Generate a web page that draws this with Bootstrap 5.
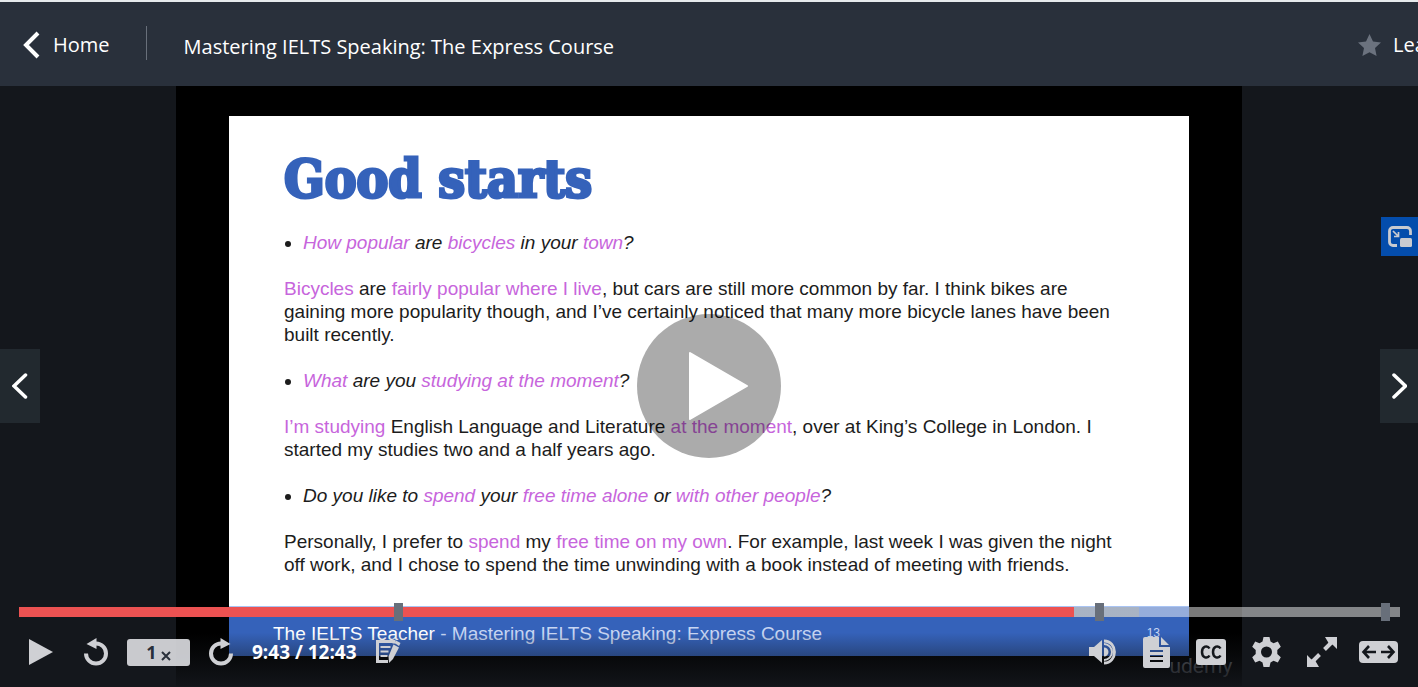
<!DOCTYPE html>
<html lang="en">
<head>
<meta charset="utf-8">
<meta name="viewport" content="width=device-width, initial-scale=1">
<title>Mastering IELTS Speaking: The Express Course</title>
<link href="https://cdn.jsdelivr.net/npm/bootstrap@5.3.0/dist/css/bootstrap.min.css" rel="stylesheet">
<style>
body { background: #14171c; font-family: "Open Sans", "Noto Sans", sans-serif; }
.topbar { height: 86px; background: #29303b; border-top: 2px solid #e6eaec; font-size: 20px; padding: 2px 0 0 23px; }
.topbar a { color: #fff; }
.home-link { gap: 13px; }
.divider { width: 1px; height: 34px; background: #686f7a; margin: 0 37px 4px 36px; }
.rate-btn { width: 60px; gap: 12px; font-size: 20px; }
.rate-btn span { color: #fff; }
.stage { min-height: 600px; margin-bottom: 1px; }
.video-box { height: 600px; aspect-ratio: 16 / 9; background: #000; }
.slide { width: 90%; height: 90%; background: #fff; color: #1c1c1c; font-family: "Liberation Sans", Arial, sans-serif; font-size: 19px; line-height: 23px; }
.slide-body { padding: 30px 55px 0; }
.slide-title { font-family: "DejaVu Serif Condensed", "DejaVu Serif", serif; font-weight: 700; font-size: 53px; line-height: 64px; margin-bottom: 21px; color: #3562ba; -webkit-text-stroke: 3px #3562ba; }
.slide p, .slide ul { margin-bottom: 23px; white-space: nowrap; }
.slide ul { padding-left: 19px; font-style: italic; }
.slide b { font-weight: 400; color: #c765dc; }
.slide-foot { height: 50px; padding: 3px 29px 0 44px; background: #3562ba; border-top: 1px solid #a9c4f3; color: #c8d6f3; }
.slide-foot strong { font-weight: 400; color: #fff; }
.slide-foot small { font-size: 12px; }
.watermark { right: 10px; bottom: 7px; color: #5c5e63; font-family: Roboto, sans-serif; font-size: 21px; line-height: 26px; }
.big-play { width: 144px; height: 144px; background: rgba(0,0,0,.33); }
.side-btn { width: 40px; height: 74px; background: #22292f; }
.side-btn.next { width: 38px; }
.side-btn, .pip-btn { border-radius: 0; }
.pip-btn { top: 131px; width: 37px; height: 39px; background: #044dac; }
.controls { height: 82px; padding: 3px 18px 0 19px; background: linear-gradient(rgba(20,23,28,0) 35%, rgba(20,23,28,.35) 62%, rgba(20,23,28,.9)); }
.track { height: 10px; }
.track input { appearance: none; height: 10px; background: linear-gradient(90deg, #ec5252 76.4%, rgba(184,190,197,.88) 76.4% 81.1%, rgba(255,255,255,.48) 81.1%); }
.track input::-webkit-slider-thumb { appearance: none; width: 1px; height: 1px; opacity: 0; }
.bookmark { width: 9px; height: 18px; top: -4px; background: #686f7a; }
.control-row { padding: 0 2px 0 9px; height: 70px; color: #cfd0d4; }
.btn-plain, .btn-plain:hover { padding: 0; border: 0; color: inherit; display: flex; align-items: center; justify-content: center; }
.left-set { gap: 19px; }
.right-set { gap: 22px; }
.control-row .speed { width: 63px; height: 27px; border-radius: 3px; background: rgba(221,222,226,.9); color: #29303b; font-weight: 700; font-size: 18px; gap: 4px; }
.time { color: #fff; font-weight: 700; font-size: 19px; white-space: nowrap; }
svg { display: block; flex: none; }
</style>
</head>
<body class="d-flex flex-column min-vh-100 overflow-hidden">
<header class="topbar d-flex align-items-center flex-shrink-0 overflow-hidden">
  <a href="#" class="home-link d-flex align-items-center text-decoration-none">
    <svg width="17" height="28" viewBox="0 0 17 28" fill="none" stroke="#fff" stroke-width="4"><path d="M15 2 3 14l12 12"/></svg>Home</a>
  <span class="divider"></span>
  <a href="#" class="text-decoration-none text-nowrap pt-1">Mastering IELTS Speaking: The Express Course</a>
  <button class="rate-btn btn btn-plain ms-auto justify-content-start flex-shrink-0 overflow-hidden">
    <svg width="23" height="23" viewBox="0 0 23 23" fill="#6b727e"><path d="M11.500 0 15 7.500l8 1.100-6 5.500 1.600 8-7.100-3.900-7.100 3.900 1.600-8-6-5.500 8-1.100z"/></svg><span>Lea</span></button>
</header>
<main class="stage position-relative flex-grow-1 d-flex justify-content-center">
  <section class="video-box position-relative d-flex align-items-center justify-content-center">
    <article class="slide d-flex flex-column">
      <div class="slide-body flex-grow-1">
        <h1 class="slide-title">Good starts</h1>
        <ul><li><b>How popular</b> are <b>bicycles</b> in your <b>town</b>?</li></ul>
        <p><b>Bicycles</b> are <b>fairly popular where I live</b>, but cars are still more common by far. I think bikes are<br>gaining more popularity though, and I’ve certainly noticed that many more bicycle lanes have been<br>built recently.</p>
        <ul><li><b>What</b> are you <b>studying at the moment</b>?</li></ul>
        <p><b>I’m studying</b> English Language and Literature <b>at the moment</b>, over at King’s College in London. I<br>started my studies two and a half years ago.</p>
        <ul><li>Do you like to <b>spend</b> your <b>free time alone</b> or <b>with other people</b>?</li></ul>
        <p>Personally, I prefer to <b>spend</b> my <b>free time on my own</b>. For example, last week I was given the night<br>off work, and I chose to spend the time unwinding with a book instead of meeting with friends.</p>
      </div>
      <footer class="slide-foot d-flex align-items-center justify-content-between"><span><strong>The IELTS Teacher</strong> - Mastering IELTS Speaking: Express Course</span><small>13</small></footer>
    </article>
    <span class="watermark position-absolute">udemy</span>
  </section>
  <button class="big-play btn btn-plain rounded-circle position-absolute top-50 start-50 translate-middle" aria-label="Play video">
    <svg width="144" height="144" viewBox="0 0 144 144"><path d="M53 39 110 72 53 105z" fill="#fff" stroke="#fff" stroke-width="2" stroke-linejoin="round"/></svg></button>
  <button class="side-btn btn btn-plain position-absolute start-0 top-50 translate-middle-y" aria-label="Previous lecture">
    <svg width="16" height="28" viewBox="0 0 16 28" fill="none" stroke="#fff" stroke-width="3.500" stroke-linecap="round"><path d="M13.500 3 2 14l11.500 11"/></svg></button>
  <button class="side-btn next btn btn-plain position-absolute end-0 top-50 translate-middle-y" aria-label="Next lecture">
    <svg width="16" height="28" viewBox="0 0 16 28" fill="none" stroke="#fff" stroke-width="3.500" stroke-linecap="round"><path d="M3 3 14.500 14 3 25"/></svg></button>
  <button class="pip-btn btn btn-plain position-absolute end-0" aria-label="Picture in picture">
    <svg width="24" height="22" viewBox="0 0 24 22"><path d="M22.500 9V5a3.500 3.500 0 0 0-3.500-3.500H5A3.500 3.500 0 0 0 1.500 5v11A3.500 3.500 0 0 0 5 19.500h4" fill="none" stroke="#c9cbd0" stroke-width="2.800"/><rect x="12" y="12" width="12" height="9" rx="1.500" fill="#c9cbd0"/><path d="m5 5 5 5M10.500 6v4.500H6" fill="none" stroke="#c9cbd0" stroke-width="1.700"/></svg></button>
  <div class="controls position-absolute start-0 end-0 bottom-0">
    <div class="track position-relative">
      <input type="range" class="d-block w-100" min="0" max="763" value="583" aria-label="Video progress">
      <span class="bookmark position-absolute" style="left:27.15%"></span>
      <span class="bookmark position-absolute" style="left:77.9%"></span>
      <span class="bookmark position-absolute" style="left:98.6%"></span>
    </div>
    <div class="control-row d-flex align-items-center justify-content-between">
      <div class="left-set d-flex align-items-center">
        <button class="btn btn-plain" aria-label="Play"><svg width="37" height="28" viewBox="0 0 37 28" fill="currentColor"><path d="M1 1v26l24-13z"/></svg></button>
        <button class="btn btn-plain" aria-label="Rewind"><svg width="24" height="28" viewBox="0 0 24 28"><path d="M2 15.500a10 10 0 1 0 10-10" fill="none" stroke="currentColor" stroke-width="4"/><path d="M2.500 6 12.500 0v11z" fill="currentColor"/></svg></button>
        <button class="btn btn-plain speed">1<svg width="10" height="10" viewBox="0 0 10 10" stroke="#29303b" stroke-width="2" class="mt-2"><path d="m1 1 8 8M9 1 1 9"/></svg></button>
        <button class="btn btn-plain" aria-label="Forward"><svg width="24" height="28" viewBox="0 0 24 28"><path d="M22 15.500a10 10 0 1 1-10-10" fill="none" stroke="currentColor" stroke-width="4"/><path d="M21.500 6 11.500 0v11z" fill="currentColor"/></svg></button>
        <span class="time">9:43 / 12:43</span>
        <button class="btn btn-plain" aria-label="Add note"><svg width="25" height="24" viewBox="0 0 25 24" fill="none" stroke="currentColor"><path d="M18 3.500V1.500H1.500v20H12" stroke-width="3"/><path d="M4.500 7h10M4.500 11.500h8M4.500 16h7" stroke-width="2.200"/><path d="M17.500 4.500 23 7.500 17 19l-4 4-.5-6.500z" fill="currentColor" stroke="none"/><path d="m18.500 3 1.500-2.500 4.500 2.500-1.500 3z" fill="currentColor" stroke="none"/></svg></button>
      </div>
      <div class="right-set d-flex align-items-center">
        <button class="btn btn-plain me-1" aria-label="Mute"><svg width="29" height="26" viewBox="0 0 29 26"><path d="M1 8h5l8-7v23l-8-7H1zM16 8.500a4.500 4.500 0 0 1 0 9z" fill="currentColor"/><path d="M16 5a7.500 7.500 0 0 1 0 16" fill="none" stroke="currentColor" stroke-width="2"/><path d="M16 2c14 0 14 22 0 22" fill="none" stroke="currentColor" stroke-width="2.800"/></svg></button>
        <button class="btn btn-plain me-1" aria-label="Transcript"><svg width="27" height="32" viewBox="0 0 27 32"><path fill-rule="evenodd" d="M2 1h14v10h11v19a2 2 0 0 1-2 2H2a2 2 0 0 1-2-2V3a2 2 0 0 1 2-2zM7 14v2h13v-2zm0 5v2h13v-2zm0 5v2h13v-2zM18 1l8 8h-8z" fill="currentColor"/></svg></button>
        <button class="btn btn-plain me-1" aria-label="Captions"><svg width="30" height="26" viewBox="0 0 30 26"><rect width="30" height="26" rx="3" fill="currentColor"/><path d="M13.500 9.500C11.500 6 6 7 6 13s5.500 7 7.500 3.500M24.500 9.500C22.500 6 17 7 17 13s5.500 7 7.500 3.500" fill="none" stroke="#14171c" stroke-width="2.500"/></svg></button>
        <button class="btn btn-plain me-1" aria-label="Settings"><svg width="29" height="32" viewBox="0 0 29 32"><path fill-rule="evenodd" d="M11.500 1h6l1 4.500 3 1.700 4.300-1.700 3 5.200-3.500 3.300v4l3.500 3.300-3 5.200-4.300-1.700-3 1.700-1 4.500h-6l-1-4.500-3-1.700-4.300 1.700-3-5.200L3.700 18v-4L.2 10.700l3-5.200 4.300 1.700 3-1.700zM14.500 10.500a5.500 5.500 0 1 0 0 11 5.500 5.500 0 0 0 0-11z" fill="currentColor"/></svg></button>
        <button class="btn btn-plain" aria-label="Full screen"><svg width="30" height="30" viewBox="0 0 30 30" fill="none" stroke="currentColor" stroke-width="4"><path d="M17.500 12.500 26 4M12.500 17.500 4 26"/><path d="M18 0h12v12l-4.500-4.500h-3zM12 30H0V18l4.500 4.500h3z" fill="currentColor" stroke="none"/></svg></button>
        <button class="btn btn-plain" aria-label="Expanded view"><svg width="39" height="22" viewBox="0 0 39 22"><rect width="39" height="22" rx="4" fill="currentColor"/><path d="M5 11h12M10 5l-5.500 6 5.500 6M22 11h12M29 5l5.500 6-5.500 6" fill="none" stroke="#14171c" stroke-width="2.600"/></svg></button>
      </div>
    </div>
  </div>
</main>
<script src="https://cdn.jsdelivr.net/npm/bootstrap@5.3.0/dist/js/bootstrap.bundle.min.js"></script>
</body>
</html>
